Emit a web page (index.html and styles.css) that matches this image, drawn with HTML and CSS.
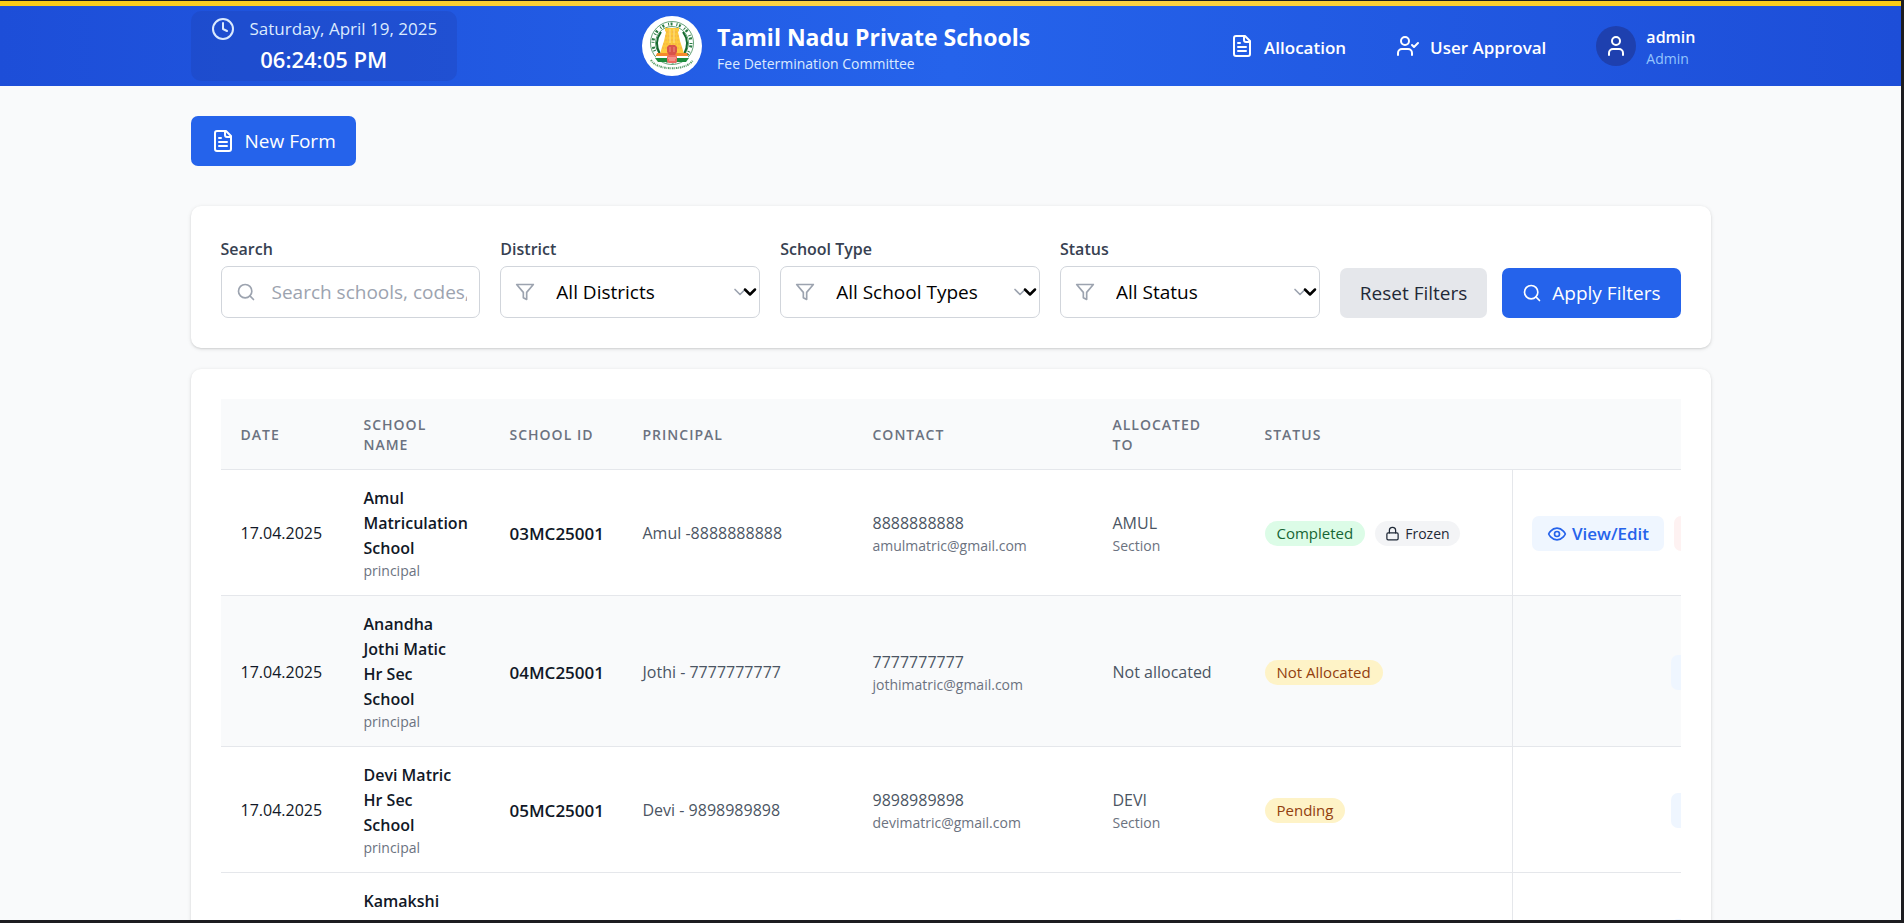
FILE: index.html
```html
<!DOCTYPE html>
<html lang="en">
<head>
<meta charset="utf-8">
<title>Tamil Nadu Private Schools - Fee Determination Committee</title>
<link rel="stylesheet" href="styles.css">
</head>
<body>
<svg class="sprite" aria-hidden="true">
  <symbol id="file" viewBox="0 0 24 24"><path d="M15 2H6a2 2 0 0 0-2 2v16a2 2 0 0 0 2 2h12a2 2 0 0 0 2-2V7z"/><path d="M14 2v4a2 2 0 0 0 2 2h4M16 13H8M16 17H8M10 9H8"/></symbol>
  <symbol id="clock" viewBox="0 0 24 24"><circle cx="12" cy="12" r="10"/><path d="M12 6v6l4 2"/></symbol>
  <symbol id="user" viewBox="0 0 24 24"><circle cx="12" cy="7" r="4"/><path d="M19 21v-2a4 4 0 0 0-4-4H9a4 4 0 0 0-4 4v2"/></symbol>
  <symbol id="user-check" viewBox="0 0 24 24"><circle cx="9" cy="7" r="4"/><path d="M16 21v-2a4 4 0 0 0-4-4H6a4 4 0 0 0-4 4v2M16 11l2 2 4-4"/></symbol>
  <symbol id="search" viewBox="0 0 24 24"><circle cx="11" cy="11" r="8"/><path d="m21 21-4.300-4.300"/></symbol>
  <symbol id="filter" viewBox="0 0 24 24"><path d="M22 3H2l8 9.460V19l4 2v-8.540z"/></symbol>
  <symbol id="chevron" viewBox="0 0 24 24"><path d="m6 9 6 6 6-6"/></symbol>
  <symbol id="lock" viewBox="0 0 24 24"><rect x="3" y="11" width="18" height="11" rx="2"/><path d="M7 11V7a5 5 0 0 1 10 0v4"/></symbol>
  <symbol id="eye" viewBox="0 0 24 24"><path d="M2 12s3-7 10-7 10 7 10 7-3 7-10 7-10-7-10-7Z"/><circle cx="12" cy="12" r="3"/></symbol>
</svg>
<div class="app">
  <header class="header">
    <div class="container header-row">
      <div class="datetime">
        <div class="date"><svg class="icon icon-lg"><use href="#clock"/></svg><span>Saturday, April 19, 2025</span></div>
        <div class="time">06:24:05 PM</div>
      </div>
      <div class="brand">
        <svg class="emblem" viewBox="0 0 60 60" role="img" aria-label="Emblem">
          <circle cx="30" cy="30" r="30" fill="#fff"/>
          <circle cx="30" cy="27" r="21.500" fill="none" stroke="#3f8a55" stroke-width="0.800"/>
          <circle cx="30" cy="27" r="19" fill="none" stroke="#2c7d45" stroke-width="3" stroke-dasharray="1 1.500 2 4"/>
          <circle cx="30" cy="27" r="16.500" fill="none" stroke="#3f8a55" stroke-width="0.800"/>
          <path d="M19 16c-5 7-5 15-1 22M41 16c5 7 5 15 1 22" fill="none" stroke="#14692f" stroke-width="2"/>
          <path d="M23 11l1 1h12l1-1v4l-1 1 2 9 2 6 2 7H18l2-7 2-6 2-9-1-1z" fill="#fcc93c"/>
          <path d="M24 16h12M23 20h14M23 24h14M21 28h18M20 32h20" stroke="#f3a64a" stroke-width="0.800" stroke-dasharray="2 1"/>
          <path d="M28 13v14M32 13v14" stroke="#fde28c" stroke-width="1"/>
          <path d="M15 37h30l1 3H14z" fill="#f58a2b"/>
          <path d="M14 40h32v2H14z" fill="#fff"/>
          <path d="M13 42h34l-3 4H16z" fill="#1f8c3c"/>
          <path d="M25 31l2-2h6l2 2v5l-2 3h-6l-2-3z" fill="#d9534a"/>
          <path d="M28 31v5M32 31v5" stroke="#f0a08f" stroke-width="0.800"/>
          <rect x="25" y="39" width="10" height="8" rx="2" fill="#ef6a62"/>
          <path d="M26 42h8M27 44h6" stroke="#fbd0c8" stroke-width="0.800"/>
          <path d="M9 44c6 11 36 11 42 0" fill="none" stroke="#5b9e6c" stroke-width="2" stroke-dasharray="1.500 0.800 0.800 0.800"/>
        </svg>
        <div class="brand-text">
          <h1 class="brand-title">Tamil Nadu Private Schools</h1>
          <p class="brand-sub">Fee Determination Committee</p>
        </div>
      </div>
      <nav class="nav">
        <a class="nav-link" href="#allocation"><svg class="icon icon-lg"><use href="#file"/></svg><span>Allocation</span></a>
        <a class="nav-link" href="#approval"><svg class="icon icon-lg"><use href="#user-check"/></svg><span>User Approval</span></a>
        <div class="profile">
          <span class="avatar"><svg class="icon icon-lg"><use href="#user"/></svg></span>
          <div class="profile-text"><div class="profile-name">admin</div><div class="profile-role">Admin</div></div>
        </div>
      </nav>
    </div>
  </header>

  <main class="container main">
    <button class="btn btn-primary btn-new" type="button"><svg class="icon icon-lg"><use href="#file"/></svg>New Form</button>

    <form class="card filters">
      <div class="field">
        <label for="q">Search</label>
        <div class="control"><svg class="icon icon-md lead"><use href="#search"/></svg><input id="q" type="text" placeholder="Search schools, codes, principals"></div>
      </div>
      <div class="field">
        <label for="district">District</label>
        <div class="control"><svg class="icon icon-md lead"><use href="#filter"/></svg><select id="district"><option>All Districts</option></select><svg class="icon icon-md trail"><use href="#chevron"/></svg><svg class="icon icon-md arrow"><use href="#chevron"/></svg></div>
      </div>
      <div class="field">
        <label for="type">School Type</label>
        <div class="control"><svg class="icon icon-md lead"><use href="#filter"/></svg><select id="type"><option>All School Types</option></select><svg class="icon icon-md trail"><use href="#chevron"/></svg><svg class="icon icon-md arrow"><use href="#chevron"/></svg></div>
      </div>
      <div class="field">
        <label for="status">Status</label>
        <div class="control"><svg class="icon icon-md lead"><use href="#filter"/></svg><select id="status"><option>All Status</option></select><svg class="icon icon-md trail"><use href="#chevron"/></svg><svg class="icon icon-md arrow"><use href="#chevron"/></svg></div>
      </div>
      <div class="filter-actions">
        <button class="btn btn-muted" type="reset">Reset Filters</button>
        <button class="btn btn-primary" type="button"><svg class="icon icon-md"><use href="#search"/></svg>Apply Filters</button>
      </div>
    </form>

    <section class="card table-card">
      <div class="table-scroll">
        <table class="table">
          <colgroup><col class="c-date"><col class="c-name"><col class="c-id"><col class="c-principal"><col class="c-contact"><col class="c-alloc"><col class="c-status"><col class="c-actions"></colgroup>
          <thead>
            <tr><th>Date</th><th>School Name</th><th>School ID</th><th>Principal</th><th>Contact</th><th>Allocated<br>To</th><th>Status</th><th></th></tr>
          </thead>
          <tbody>
            <tr>
              <td class="strong">17.04.2025</td>
              <td><div class="name">Amul<br>Matriculation<br>School</div><div class="sub">principal</div></td>
              <td class="code">03MC25001</td>
              <td>Amul -8888888888</td>
              <td>8888888888<div class="sub">amulmatric@gmail.com</div></td>
              <td>AMUL<div class="sub">Section</div></td>
              <td><div class="badges"><span class="badge green">Completed</span><span class="badge gray"><svg class="icon icon-sm"><use href="#lock"/></svg>Frozen</span></div></td>
              <td class="actions"><div class="action-row"><button class="action view" type="button"><svg class="icon icon-md"><use href="#eye"/></svg>View/Edit</button><button class="action danger" type="button"><svg class="icon icon-md"><use href="#lock"/></svg>Unfreeze</button></div></td>
            </tr>
            <tr>
              <td class="strong">17.04.2025</td>
              <td><div class="name">Anandha<br>Jothi Matic<br>Hr Sec<br>School</div><div class="sub">principal</div></td>
              <td class="code">04MC25001</td>
              <td>Jothi - 7777777777</td>
              <td>7777777777<div class="sub">jothimatric@gmail.com</div></td>
              <td>Not allocated</td>
              <td><div class="badges"><span class="badge amber">Not Allocated</span></div></td>
              <td class="actions"><div class="action-row"><button class="action view" type="button"><svg class="icon icon-md"><use href="#eye"/></svg>View/Edit</button></div></td>
            </tr>
            <tr>
              <td class="strong">17.04.2025</td>
              <td><div class="name">Devi Matric<br>Hr Sec<br>School</div><div class="sub">principal</div></td>
              <td class="code">05MC25001</td>
              <td>Devi - 9898989898</td>
              <td>9898989898<div class="sub">devimatric@gmail.com</div></td>
              <td>DEVI<div class="sub">Section</div></td>
              <td><div class="badges"><span class="badge amber">Pending</span></div></td>
              <td class="actions"><div class="action-row"><button class="action view" type="button"><svg class="icon icon-md"><use href="#eye"/></svg>View/Edit</button></div></td>
            </tr>
            <tr>
              <td></td>
              <td><div class="name">Kamakshi<br>Matric<br>School</div><div class="sub">principal</div></td>
              <td></td><td></td><td></td><td></td><td></td>
              <td class="actions"><div class="action-row"><button class="action view" type="button"><svg class="icon icon-md"><use href="#eye"/></svg>View/Edit</button></div></td>
            </tr>
          </tbody>
        </table>
      </div>
    </section>
  </main>
</div>
</body>
</html>
```
FILE: styles.css
```css
*, *::before, *::after { box-sizing: border-box; }

body {
  margin: 0;
  font-family: "Open Sans", "Noto Sans", sans-serif;
  font-size: 16px;
  line-height: 25px;
  color: #111827;
}
h1, p { margin: 0; }
button, input, select { font: inherit; color: inherit; }
.sprite { display: none; }

/* Window frame around the page */
.app {
  height: 100vh;
  overflow: hidden;
  background: #f9fafb;
  border: solid #1c1c20;
  border-width: 1px 3px 3px 0;
}
.container { width: 90%; max-width: 1520px; margin: 0 auto; }

.icon {
  flex: none;
  fill: none;
  stroke: currentColor;
  stroke-width: 2;
  stroke-linecap: round;
  stroke-linejoin: round;
}
.icon-lg { width: 24px; height: 24px; }
.icon-md { width: 20px; height: 20px; }
.icon-sm { width: 15px; height: 15px; }

/* Header */
.header {
  background: linear-gradient(90deg, #1d4ed8, #2563eb 50%, #1d4ed8);
  color: #fff;
}
.header::before {
  content: "";
  display: block;
  height: 5px;
  background: linear-gradient(90deg, #facc15, #fcd34d 50%, #facc15);
}
.header-row {
  display: flex;
  align-items: center;
  justify-content: space-between;
  height: 80px;
}
.datetime {
  padding: 4px 20px 6px;
  border-radius: 10px;
  background: rgba(30, 64, 175, 0.3);
  text-align: center;
}
.date {
  display: flex;
  align-items: center;
  gap: 15px;
  color: #dbeafe;
  font-size: 17px;
  font-weight: 500;
  line-height: 28px;
}
.time { font-size: 22px; font-weight: 600; line-height: 32px; }
.brand { display: flex; align-items: center; gap: 15px; }
.emblem { width: 60px; height: 60px; }
.brand-text { padding-top: 5px; }
.brand-title { font-size: 23px; font-weight: 700; line-height: 31px; }
.brand-sub { font-size: 14px; line-height: 22px; color: #dbeafe; }
.nav { display: flex; align-items: center; gap: 20px; }
.nav-link {
  display: flex;
  align-items: center;
  gap: 10px;
  padding: 0 15px;
  color: #fff;
  font-size: 17px;
  font-weight: 600;
  text-decoration: none;
}
.nav-link span { padding-top: 2px; }
.profile { display: flex; align-items: center; gap: 10px; padding: 0 15px; }
.avatar {
  display: grid;
  place-items: center;
  width: 40px;
  height: 40px;
  border-radius: 50%;
  background: #1e40af;
}
.profile-text { padding-top: 4px; }
.profile-name { font-weight: 600; line-height: 22px; }
.profile-role { font-size: 14px; line-height: 22px; color: #93c5fd; }

/* Buttons */
.btn {
  display: inline-flex;
  align-items: center;
  justify-content: center;
  gap: 10px;
  height: 50px;
  padding: 0 20px;
  border: 0;
  border-radius: 7px;
  font-size: 19px;
  white-space: nowrap;
}
.btn-primary { background: #2563eb; color: #fff; }
.btn-muted { background: #e5e7eb; color: #1f2937; }

.main { padding-top: 30px; }
.card {
  background: #fff;
  border-radius: 10px;
  padding: 30px;
  box-shadow: 0 1px 4px rgba(0, 0, 0, 0.1), 0 1px 2px rgba(0, 0, 0, 0.1);
}

/* Filters */
.filters { display: flex; align-items: flex-end; gap: 20px; margin-top: 40px; }
.field { flex: 1; min-width: 0; }
.field label { display: block; margin-bottom: 3px; font-weight: 600; line-height: 27px; color: #374151; }
.control { position: relative; }
.control input, .control select {
  display: block;
  width: 100%;
  height: 52px;
  border: 1px solid #d1d5db;
  border-radius: 7px;
  background: #fff;
  color: #000;
  font-size: 19px;
}
.control input { padding: 0 12px 0 50px; }
.control select { padding: 0 40px 0 55px; appearance: none; }
.control input::placeholder { color: #9ca3af; opacity: 1; }
.lead, .trail, .arrow { position: absolute; top: 16px; color: #9ca3af; }
.lead { left: 15px; }
.trail { right: 10px; }
.arrow { right: 0; color: #000; stroke-width: 3; }
.filter-actions { display: flex; gap: 15px; }

/* Table */
.table-card { margin-top: 21px; }
.table-scroll { overflow-x: auto; scrollbar-width: none; }
.table { width: 1603px; table-layout: fixed; border-collapse: separate; border-spacing: 0; }
.c-date { width: 123px; }
.c-name { width: 146px; }
.c-id { width: 133px; }
.c-principal { width: 230px; }
.c-contact { width: 240px; }
.c-alloc { width: 152px; }
.c-status { width: 267px; }
.table th, .table td {
  padding: 16px 20px 14px;
  border-bottom: 1px solid #e5e7eb;
  text-align: left;
  vertical-align: middle;
}
.table th {
  background: #f9fafb;
  color: #6b7280;
  font-size: 14px;
  font-weight: 600;
  line-height: 20px;
  letter-spacing: 1px;
  text-transform: uppercase;
}
.table td { color: #4b5563; white-space: nowrap; }
.table tbody tr:nth-child(2) { background: #f9fafb; }
.table td.strong { color: #111827; }
.table td.code { color: #111827; font-size: 17px; font-weight: 600; }
.name { color: #111827; font-weight: 600; }
.sub { font-size: 14px; line-height: 20px; color: #6b7280; }
.badges { display: flex; gap: 10px; }
.badge {
  display: inline-flex;
  align-items: center;
  gap: 5px;
  height: 25px;
  padding: 0 12px;
  border-radius: 13px;
  font-size: 15px;
  font-weight: 500;
}
.badge.gray { padding: 0 10px; font-size: 14px; }
.green { background: #dcfce7; color: #166534; }
.gray { background: #f3f4f6; color: #1f2937; }
.amber { background: #fef3c7; color: #92400e; }
.table td.actions { border-left: 1px solid #e5e7eb; }
.action-row { display: flex; justify-content: flex-end; gap: 10px; }
.action {
  display: inline-flex;
  align-items: center;
  gap: 5px;
  height: 35px;
  padding: 0 15px;
  border: 0;
  border-radius: 7px;
  font-size: 17px;
  font-weight: 600;
}
.view { background: #eff6ff; color: #2563eb; }
.danger { background: #fef2f2; color: #dc2626; }
```
